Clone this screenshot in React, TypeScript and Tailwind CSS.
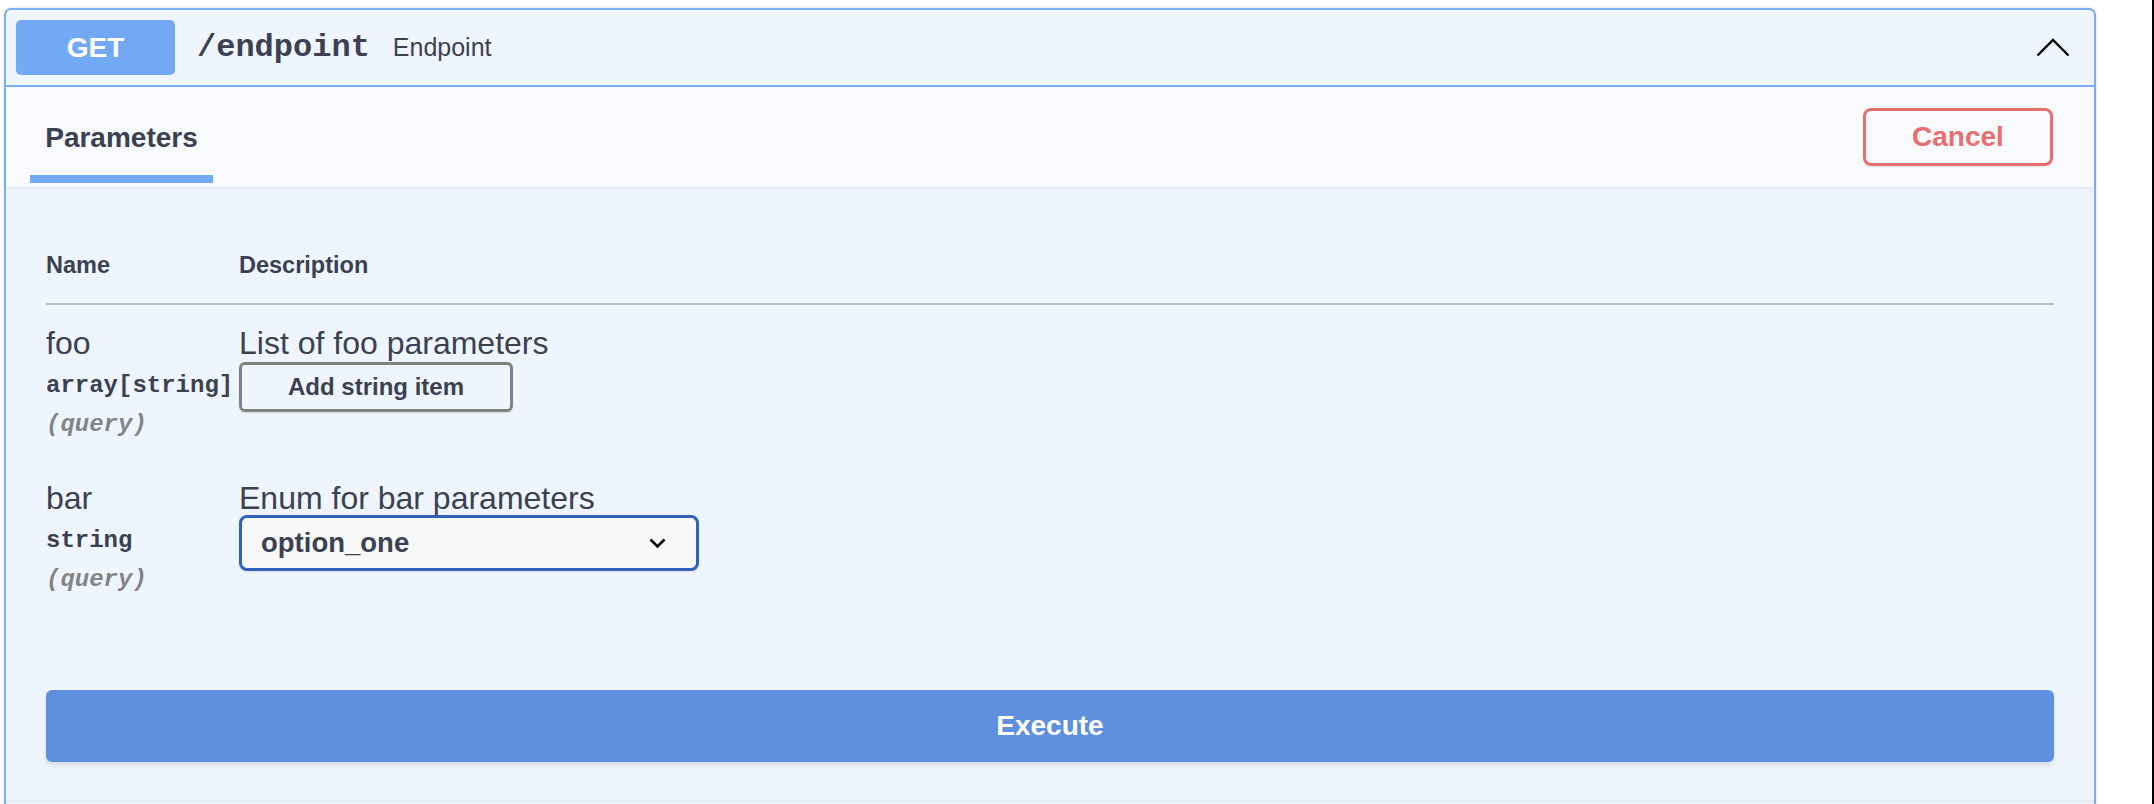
import React from "react";

const mono = "font-['Liberation_Mono','Courier_New',monospace]";

function ChevronUp() {
  return (
    <svg width="34" height="19" viewBox="0 0 34 19" fill="none">
      <path d="M1.5 17.5 L17 2 L32.5 17.5" stroke="#000" strokeWidth="2.4" />
    </svg>
  );
}

function ChevronDown() {
  return (
    <svg width="17" height="11" viewBox="0 0 17 11" fill="none">
      <path d="M1.5 1.5 L8.5 8.5 L15.5 1.5" stroke="#000" strokeWidth="2.6" />
    </svg>
  );
}

function ParamRow({
  name,
  type,
  description,
  className,
  children,
}: {
  name: string;
  type: string;
  description: string;
  className?: string;
  children: React.ReactNode;
}) {
  return (
    <div className={`flex ${className ?? ""}`}>
      <div className="flex w-[193px] shrink-0 flex-col">
        <div className="text-[32px] leading-[34px]">{name}</div>
        <div className={`mt-[13px] ${mono} text-[24px] font-bold leading-[26px]`}>
          {type}
        </div>
        <div
          className={`mt-[13px] ${mono} text-[24px] font-bold italic leading-[26px] text-[#848484]`}
        >
          (query)
        </div>
      </div>
      <div className="flex flex-col items-start">
        <div className="text-[32px] leading-[34px]">{description}</div>
        {children}
      </div>
    </div>
  );
}

export default function App() {
  return (
    <div className="flex h-[804px] w-[2154px] overflow-hidden bg-white font-['Liberation_Sans',Arial,sans-serif] text-[#3b4151]">
      <div className="pl-[4px] pt-[8px]">
        <div className="h-[820px] w-[2092px] rounded-t-[7px] border-2 border-b-0 border-[#7eadf0] bg-[#eff5fe] shadow-[0_0_3px_rgba(0,0,0,0.15)]">
          {/* summary */}
          <div className="flex h-[77px] items-center border-b-2 border-[#7eadf0] pl-[10px] pr-[24px]">
            <div className="flex h-[55px] w-[159px] items-center justify-center rounded-[5px] bg-[#71a9f5] text-[28px] font-bold text-white">
              GET
            </div>
            <span className={`ml-[22px] ${mono} text-[32px] font-bold`}>/endpoint</span>
            <span className="ml-[23px] text-[25px]">Endpoint</span>
            <div className="ml-auto flex items-center">
              <ChevronUp />
            </div>
          </div>

          {/* tabs */}
          <div className="relative flex h-[100px] items-center justify-between bg-[#f8fafe] pl-[24px] pr-[41px] shadow-[0_1px_3px_rgba(0,0,0,0.08)]">
            <div className="flex h-full w-[183px] flex-col">
              <div className="flex flex-1 items-center justify-center pt-[13px] text-[28px] font-bold">
                Parameters
              </div>
              <div className="mb-[4px] h-[8px] bg-[#71a9f5]" />
            </div>
            <button className="flex h-[58px] w-[190px] items-center justify-center rounded-[8px] border-[3px] border-[#e86f6f] text-[28px] font-bold text-[#e86f6f] shadow-[0_1px_2px_rgba(0,0,0,0.08)]">
              Cancel
            </button>
          </div>

          {/* parameters */}
          <div className="px-[40px]">
            <div className="flex border-b-2 border-[#b8bbc2] pb-[25px] pt-[65px] text-[23.5px] font-bold leading-[26px]">
              <div className="w-[193px]">Name</div>
              <div>Description</div>
            </div>

            <ParamRow
              name="foo"
              type="array[string]"
              description="List of foo parameters"
              className="mt-[21px]"
            >
              <button className="mt-[2px] flex h-[50px] w-[274px] items-center justify-center rounded-[6px] border-[3px] border-[#828282] text-[24px] font-bold shadow-[0_1px_2px_rgba(0,0,0,0.1)]">
                Add string item
              </button>
            </ParamRow>

            <ParamRow
              name="bar"
              type="string"
              description="Enum for bar parameters"
              className="mt-[43px]"
            >
              <div className="flex h-[56px] w-[460px] items-center justify-between rounded-[8px] border-[3px] border-[#2f62b8] bg-[#f8f8f8] pl-[19px] pr-[30px] shadow-[0_1px_2px_rgba(0,0,0,0.1)]">
                <span className="text-[27.5px] font-bold">option_one</span>
                <ChevronDown />
              </div>
            </ParamRow>

            <button className="mt-[97px] flex h-[72px] w-full items-center justify-center rounded-[6px] bg-[#5e90dd] text-[28px] font-bold text-white shadow-[0_3px_4px_rgba(0,0,0,0.1)]">
              Execute
            </button>

            <div className="-mx-[40px] mt-[38px] border-t-2 border-[#e6ebf2]" />
          </div>
        </div>
      </div>
      <div className="flex-1" />
      <div className="w-[2px] bg-black" />
    </div>
  );
}
